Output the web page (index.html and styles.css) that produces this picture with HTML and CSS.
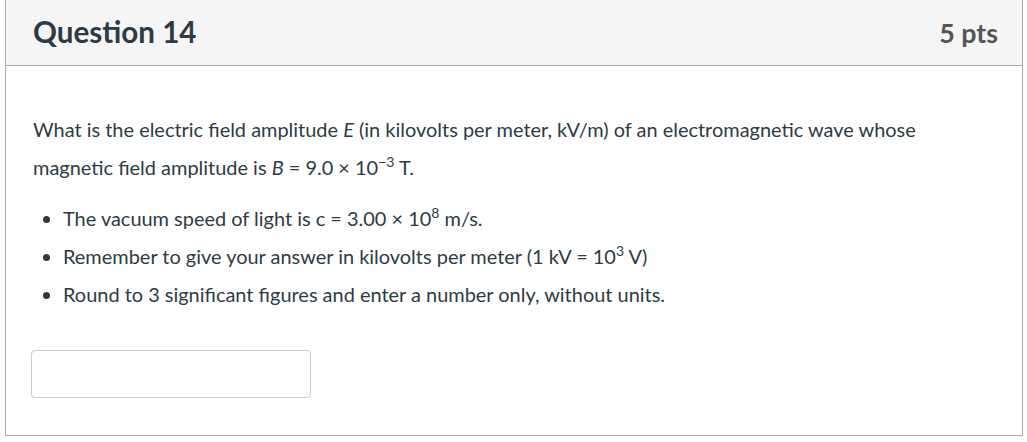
FILE: index.html
```html
<!DOCTYPE html>
<html>
<head>
<meta charset="utf-8">
<link rel="stylesheet" href="styles.css">
</head>
<body>
<div class="question">
  <div class="q-header">
    <h2 class="q-title">Question 14</h2>
    <div class="q-points">5 pts</div>
  </div>
  <div class="q-body">
    <p class="q-text">What is the electric field amplitude <em>E</em> (in kilovolts per meter, kV/m) of an electromagnetic wave whose magnetic field amplitude is <em>B</em> = 9.0 × 10<sup>−3</sup> T.</p>
    <ul class="q-list">
      <li>The vacuum speed of light is c = 3.00 × 10<sup>8</sup> m/s.</li>
      <li>Remember to give your answer in kilovolts per meter (1 kV = 10<sup>3</sup> V)</li>
      <li>Round to 3 significant figures and enter a number only, without units.</li>
    </ul>
    <div class="answer"><input class="answer-input" type="text"></div>
  </div>
</div>
</body>
</html>
```
FILE: styles.css
```css
html, body {
  margin: 0;
  padding: 0;
  background: #fff;
}
body {
  font-family: Lato, "Open Sans", sans-serif;
  color: #2d3b45;
}
.question {
  margin-left: 5px;
  width: 1018px;
  height: 436px;
  box-sizing: border-box;
  border: 1px solid #aaaaaa;
  border-top: 0;
}
.q-header {
  display: flex;
  justify-content: space-between;
  align-items: center;
  background: #f5f5f5;
  height: 65px;
  border-bottom: 1px solid #aaaaaa;
  padding: 0 24px 0 27px;
}
.q-title {
  margin: 0 0 3px;
  font-size: 29.6px;
  font-weight: 700;
  color: #2d3b45;
}
.q-points {
  font-size: 26.8px;
  font-weight: 700;
  color: #555555;
}
.q-body {
  padding: 0 0 0 27px;
}
.q-text {
  margin: 44px 0 0;
  font-size: 19.95px;
  line-height: 38px;
  width: 920px;
}
.q-text em {
  font-style: italic;
}
sup {
  font-size: 14px;
  line-height: 0;
}
.q-list {
  margin: 13px 0 0;
  padding-left: 30px;
  font-size: 19.95px;
  line-height: 38px;
}
.answer {
  margin-top: 37px;
}
.answer-input {
  width: 280px;
  height: 48px;
  box-sizing: border-box;
  border: 1px solid #c7cdd1;
  border-radius: 4px;
  margin-left: -2px;
}
```
